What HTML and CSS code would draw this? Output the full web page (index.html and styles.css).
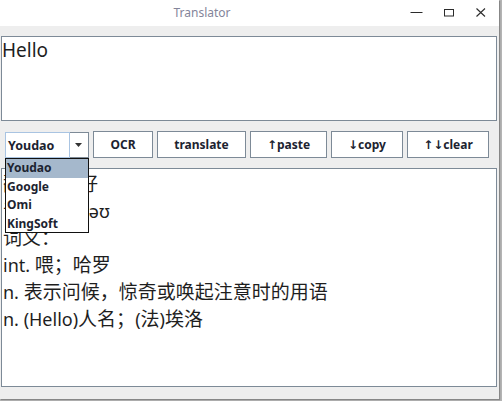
FILE: index.html
```html
<!DOCTYPE html>
<html>
<head>
<meta charset="utf-8">
<title>Translator</title>
<link rel="stylesheet" href="styles.css">
</head>
<body>
<div class="window">
  <div class="titlebar">
    <div class="title">Translator</div>
    <div class="controls">
      <div class="ctl"><svg width="33" height="26" viewBox="0 0 33 26"><line x1="10.5" y1="12.5" x2="22.5" y2="12.5" stroke="#2b2b2b" stroke-width="1"/></svg></div>
      <div class="ctl"><svg width="33" height="26" viewBox="0 0 33 26"><rect x="11.5" y="9.5" width="9" height="6.5" fill="none" stroke="#2b2b2b" stroke-width="1"/></svg></div>
      <div class="ctl"><svg width="33" height="26" viewBox="0 0 33 26"><path d="M10.5 8.5 L19 16.5 M19 8.5 L10.5 16.5" stroke="#2b2b2b" stroke-width="1.1" fill="none"/></svg></div>
    </div>
  </div>
  <div class="content">
    <div class="input">Hello</div>
    <div class="toolbar">
      <div class="combo">
        <div class="combo-text">Youdao</div>
        <div class="combo-arrow"><svg width="8" height="5" viewBox="0 0 8 5"><path d="M0 0 H7 L3.5 4 Z" fill="#333"/></svg></div>
        <ul class="popup">
          <li class="item selected">Youdao</li>
          <li class="item">Google</li>
          <li class="item">Omi</li>
          <li class="item">KingSoft</li>
        </ul>
      </div>
      <button class="btn w-ocr">OCR</button>
      <button class="btn w-translate">translate</button>
      <button class="btn w-paste">↑paste</button>
      <button class="btn w-copy">↓copy</button>
      <button class="btn w-clear">↑↓clear</button>
    </div>
    <div class="output">
      <div class="line"><span class="zh">翻译：你好</span></div>
      <div class="line"><span class="zh">音标：</span>həˈləʊ</div>
      <div class="line"><span class="zh">词义：</span></div>
      <div class="line">int. <span class="zh">喂；哈罗</span></div>
      <div class="line">n. <span class="zh">表示问候，惊奇或唤起注意时的用语</span></div>
      <div class="line">n. (Hello)<span class="zh">人名；</span>(<span class="zh">法</span>)<span class="zh">埃洛</span></div>
    </div>
  </div>
</div>
</body>
</html>
```

FILE: styles.css
```css
* { box-sizing: border-box; }
html, body { margin: 0; padding: 0; }
body {
  width: 502px;
  height: 401px;
  background: #b4b4b4;
  font-family: "Noto Sans", "DejaVu Sans", sans-serif;
  overflow: hidden;
}
.window {
  width: 499px;
  height: 399px;
  background: #eeeeee;
  display: flex;
  flex-direction: column;
  box-shadow: 1px 1px 1px rgba(0,0,0,0.25);
}
.titlebar {
  height: 26px;
  background: #ffffff;
  display: flex;
  flex: none;
}
.title {
  flex: 1;
  padding-left: 4px;
  text-align: center;
  font-size: 12px;
  line-height: 26px;
  color: #84859a;
}
.controls {
  width: 99px;
  display: flex;
}
.ctl { width: 33px; height: 26px; }
.ctl svg { display: block; }

.content {
  flex: 1;
  display: flex;
  flex-direction: column;
  gap: 10px;
  padding: 10px 2px 12px 1px;
}
.input {
  height: 85px;
  flex: none;
  background: #fff;
  border: 1px solid #7d8a97;
  font-size: 19px;
  line-height: 26px;
  color: #1e1e1e;
}
.toolbar {
  height: 27px;
  flex: none;
  display: flex;
  gap: 4px;
  padding-left: 4px;
}
.combo {
  position: relative;
  width: 84px;
  display: flex;
}
.combo-text {
  width: 65px;
  background: #fff;
  border: 1px solid #a9c4e2;
  font-size: 12.5px;
  font-weight: bold;
  line-height: 25px;
  padding-left: 2px;
  color: #1c2330;
  margin-top: 1px;
  height: 26px;
}
.combo-arrow {
  width: 19px;
  background: #fff;
  border: 1px solid #7d8a97;
  border-left: none;
  display: flex;
  align-items: center;
  justify-content: center;
  margin-top: 1px;
  height: 26px;
}
.combo-arrow svg { display: block; }
.popup {
  position: absolute;
  left: 0;
  top: 27px;
  width: 84px;
  height: 75px;
  margin: 0;
  padding: 0;
  list-style: none;
  background: #fff;
  border: 1px solid #111;
  overflow: hidden;
  z-index: 5;
}
.item {
  height: 18.5px;
  line-height: 18px;
  font-size: 12px;
  font-weight: bold;
  color: #1c2330;
  padding-left: 1px;
}
.item.selected { background: #a5b8cc; }
.btn {
  height: 27px;
  margin: 0;
  padding: 0;
  background: #fff;
  border: 1px solid #7d8a97;
  border-radius: 0;
  font-family: "Noto Sans", "DejaVu Sans", sans-serif;
  font-size: 12px;
  font-weight: bold;
  color: #1c2330;
}
.w-ocr { width: 60px; }
.w-translate { width: 89px; }
.w-paste { width: 77px; }
.w-copy { width: 72px; }
.w-clear { width: 82px; }

.output {
  flex: 1;
  background: #fff;
  border: 1px solid #7d8a97;
  font-size: 18px;
  line-height: 27px;
  color: #1e1e1e;
  padding-left: 1px;
}
.line { height: 27px; white-space: nowrap; }
.zh { font-family: "Noto Sans CJK SC", sans-serif; font-size: 19px; }
```
